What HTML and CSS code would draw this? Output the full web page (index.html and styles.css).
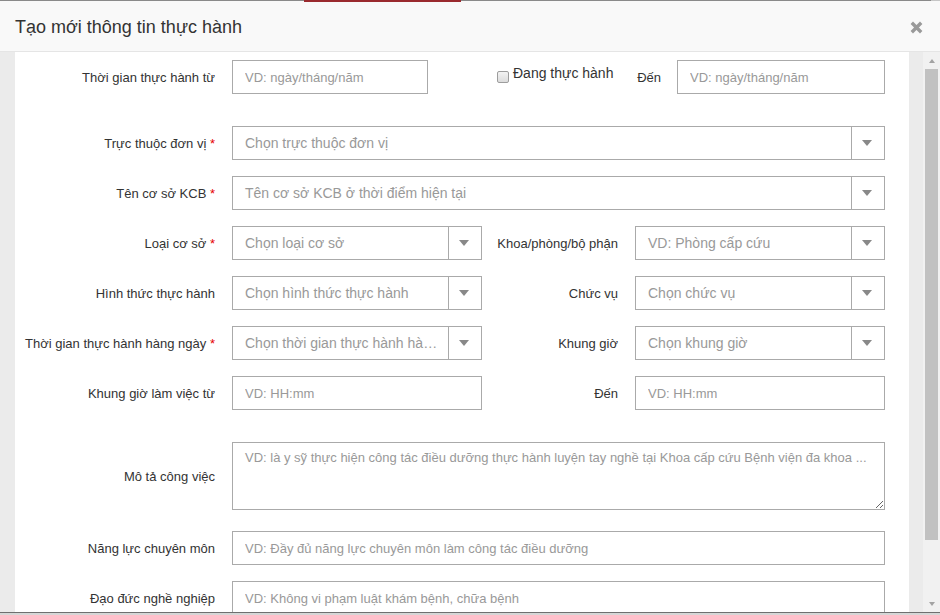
FILE: index.html
```html
<!DOCTYPE html>
<html lang="vi">
<head>
<meta charset="utf-8">
<title>Tạo mới thông tin thực hành</title>
<link rel="stylesheet" href="styles.css">
</head>
<body>
<div class="topbar"><span class="tb-left"></span><span class="tb-red"></span><span class="tb-right"></span><span class="tb-end"></span></div>
<header class="modal-header">
  <h4 class="modal-title">Tạo mới thông tin thực hành</h4>
  <button class="close" type="button" aria-label="Đóng">
    <svg width="13" height="13" viewBox="0 0 13 13"><path d="M1.8 1.8 L11.2 11.2 M11.2 1.8 L1.8 11.2" stroke="#9a9a9a" stroke-width="3.4" fill="none"/></svg>
  </button>
</header>
<div class="frame">
  <div class="side-left"></div>
  <form class="modal-body">
    <div class="row row-first">
      <label class="lbl">Thời gian thực hành từ</label>
      <input class="ctl w-from" placeholder="VD: ngày/tháng/năm">
      <label class="check"><span class="box"></span>Đang thực hành</label>
      <span class="lbl-inline">Đến</span>
      <input class="ctl w-to" placeholder="VD: ngày/tháng/năm">
    </div>

    <div class="row gap-lg">
      <label class="lbl">Trực thuộc đơn vị <span class="req">*</span></label>
      <div class="select w-full"><span class="sel-text">Chọn trực thuộc đơn vị</span><span class="sel-arrow"></span></div>
    </div>

    <div class="row">
      <label class="lbl">Tên cơ sở KCB <span class="req">*</span></label>
      <div class="select w-full"><span class="sel-text">Tên cơ sở KCB ở thời điểm hiện tại</span><span class="sel-arrow"></span></div>
    </div>

    <div class="row">
      <label class="lbl">Loại cơ sở <span class="req">*</span></label>
      <div class="select w-half"><span class="sel-text">Chọn loại cơ sở</span><span class="sel-arrow"></span></div>
      <label class="lbl2">Khoa/phòng/bộ phận</label>
      <div class="select w-half"><span class="sel-text">VD: Phòng cấp cứu</span><span class="sel-arrow"></span></div>
    </div>

    <div class="row">
      <label class="lbl">Hình thức thực hành</label>
      <div class="select w-half"><span class="sel-text">Chọn hình thức thực hành</span><span class="sel-arrow"></span></div>
      <label class="lbl2">Chức vụ</label>
      <div class="select w-half"><span class="sel-text">Chọn chức vụ</span><span class="sel-arrow"></span></div>
    </div>

    <div class="row">
      <label class="lbl">Thời gian thực hành hàng ngày <span class="req">*</span></label>
      <div class="select w-half"><span class="sel-text" title="Chọn thời gian thực hành hàng ngày">Chọn thời gian thực hành hàng ngày</span><span class="sel-arrow"></span></div>
      <label class="lbl2">Khung giờ</label>
      <div class="select w-half"><span class="sel-text">Chọn khung giờ</span><span class="sel-arrow"></span></div>
    </div>

    <div class="row">
      <label class="lbl">Khung giờ làm việc từ</label>
      <input class="ctl w-half" placeholder="VD: HH:mm">
      <label class="lbl2">Đến</label>
      <input class="ctl w-half" placeholder="VD: HH:mm">
    </div>

    <div class="row row-center gap-lg">
      <label class="lbl lbl-mid">Mô tả công việc</label>
      <textarea class="ta w-full" placeholder="VD: là y sỹ thực hiện công tác điều dưỡng thực hành luyện tay nghề tại Khoa cấp cứu Bệnh viện đa khoa ..."></textarea>
    </div>

    <div class="row gap-md">
      <label class="lbl">Năng lực chuyên môn</label>
      <input class="ctl w-full" placeholder="VD: Đầy đủ năng lực chuyên môn làm công tác điều dưỡng">
    </div>

    <div class="row">
      <label class="lbl">Đạo đức nghề nghiệp</label>
      <input class="ctl w-full" placeholder="VD: Không vi phạm luật khám bệnh, chữa bệnh">
    </div>
  </form>
  <div class="side-gap"></div>
  <div class="scrollbar">
    <span class="sb-btn sb-up"></span>
    <span class="sb-thumb"></span>
    <span class="sb-track"></span>
    <span class="sb-btn sb-down"></span>
  </div>
</div>
<div class="bottombar"></div>
</body>
</html>
```

FILE: styles.css
```css
html, body {
  margin: 0;
  padding: 0;
}
body {
  width: 940px;
  height: 615px;
  overflow: hidden;
  background: #fff;
  color: #333;
  font-family: "Liberation Sans", Arial, sans-serif;
  font-size: 13px;
}

/* top strip */
.topbar {
  display: flex;
  height: 2px;
}
.topbar span {
  display: block;
  height: 2px;
  box-sizing: border-box;
  background: #f9f9f9;
}
.tb-left { width: 304px; border-top: 1px solid #8a8a8a; }
.tb-red { width: 157px; background: #9a2a2e !important; }
.tb-right { flex: 1; border-top: 1px solid #8a8a8a; }
.tb-end { width: 9px; border-top: 1px solid #c6c6c6; }

/* header */
.modal-header {
  height: 50px;
  box-sizing: border-box;
  background: #f9f9f9;
  border-bottom: 1px solid #e5e5e5;
  display: flex;
  justify-content: space-between;
  align-items: flex-start;
}
.modal-title {
  margin: 0;
  padding: 14px 0 0 15px;
  font-size: 18px;
  font-weight: normal;
  line-height: 22px;
  color: #333;
}
.close {
  border: 0;
  background: none;
  padding: 0;
  margin: 19px 17px 0 0;
  width: 13px;
  height: 13px;
  display: block;
}
.close svg { display: block; }

/* frame */
.frame {
  display: flex;
  height: 560px;
}
.side-left {
  width: 15px;
  background: #ebebeb;
}
.side-gap {
  width: 14px;
  background: #ebebeb;
}
.modal-body {
  width: 894px;
  margin: 0;
  padding: 8px 24px 0 0;
  box-sizing: border-box;
  background: #fff;
  overflow: hidden;
}

/* rows */
.row {
  display: flex;
  align-items: flex-start;
  margin-top: 16px;
}
.row-first { margin-top: 0; }
.gap-lg { margin-top: 32px; }
.gap-md { margin-top: 21px; }
.row-center { align-items: center; }

.lbl, .lbl2, .lbl-inline {
  flex: none;
  box-sizing: border-box;
  padding-top: 7px;
  line-height: 21px;
  font-size: 13px;
  text-align: right;
  white-space: nowrap;
  color: #333;
}
.lbl { width: 200px; margin-right: 17px; }
.lbl2 { width: 136px; margin-right: 17px; }
.lbl-mid { padding-top: 0; }
.lbl-inline { margin-left: auto; margin-right: 16px; }
.req { color: #e60000; }

/* controls */
.ctl {
  flex: none;
  height: 34px;
  margin: 0;
  border: 1px solid #aaa;
  border-radius: 0;
  box-sizing: border-box;
  padding: 0 12px;
  font-family: "Liberation Sans", Arial, sans-serif;
  font-size: 13px;
  color: #555;
  background: #fff;
  outline: none;
}
.ctl::placeholder, .ta::placeholder {
  color: #999;
  opacity: 1;
}
.w-from { width: 196px; }
.w-to { width: 208px; }
.w-half { width: 250px; }
.w-full { width: 653px; }

.check {
  display: flex;
  align-items: flex-start;
  margin-left: 69px;
  padding-top: 3px;
  line-height: 21px;
  font-size: 14px;
  color: #333;
  white-space: nowrap;
}
.box {
  width: 12px;
  height: 12px;
  margin: 8px 4px 0 0;
  box-sizing: border-box;
  border: 1px solid #9d9d9d;
  border-radius: 2px;
  background: linear-gradient(#f3f3f3, #dcdcdc);
}

.select {
  flex: none;
  display: flex;
  height: 34px;
  box-sizing: border-box;
  border: 1px solid #aaa;
  background: #fff;
}
.sel-text {
  flex: 1;
  min-width: 0;
  padding: 0 10px 0 12px;
  line-height: 32px;
  font-size: 14px;
  color: #999;
  white-space: nowrap;
  overflow: hidden;
  text-overflow: ellipsis;
}
.sel-arrow {
  flex: none;
  width: 33px;
  box-sizing: border-box;
  border-left: 1px solid #aaa;
  padding-right: 2px;
  display: flex;
  align-items: center;
  justify-content: center;
}
.sel-arrow::after {
  content: "";
  width: 0;
  height: 0;
  border-left: 5px solid transparent;
  border-right: 5px solid transparent;
  border-top: 6px solid #888;
}

.ta {
  flex: none;
  display: block;
  height: 68px;
  margin: 0;
  box-sizing: border-box;
  padding: 5px 12px;
  border: 1px solid #aaa;
  border-radius: 0;
  font-family: "Liberation Sans", Arial, sans-serif;
  font-size: 13px;
  line-height: 19px;
  color: #555;
  background: #fff;
  outline: none;
  resize: vertical;
}

/* scrollbar */
.scrollbar {
  width: 17px;
  background: #f1f1f1;
  display: flex;
  flex-direction: column;
  align-items: center;
}
.sb-btn {
  flex: none;
  width: 17px;
  height: 17px;
  display: flex;
  align-items: center;
  justify-content: center;
}
.sb-up::after, .sb-down::after {
  content: "";
  width: 0;
  height: 0;
  border-left: 3.5px solid transparent;
  border-right: 3.5px solid transparent;
}
.sb-up::after { border-bottom: 4px solid #a3a3a3; }
.sb-down::after { border-top: 4px solid #a3a3a3; }
.sb-thumb {
  flex: none;
  width: 13px;
  height: 471px;
  background: #c1c1c1;
}
.sb-track { flex: 1; }

.bottombar {
  height: 3px;
  box-sizing: border-box;
  border-top: 1px solid #6f6f6f;
  background: #d6d6d6;
}
```
